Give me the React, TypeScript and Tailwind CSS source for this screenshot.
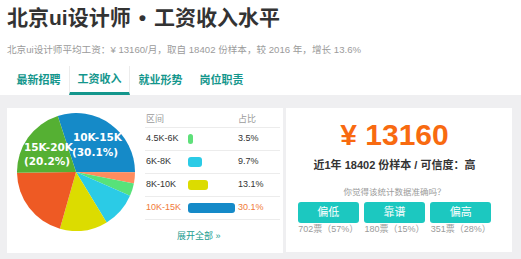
const slices = [
  { pct: 30.1, color: "#158ac8" },
  { pct: 3.0, color: "#ff8c5e" },
  { pct: 3.5, color: "#57e27a" },
  { pct: 9.7, color: "#2bcbe6" },
  { pct: 13.1, color: "#dcdc00" },
  { pct: 20.4, color: "#ee5a24" },
  { pct: 20.2, color: "#55b033" },
]

const rows = [
  { label: "4.5K-6K", pct: "3.5%", w: 5, color: "#5ee07a" },
  { label: "6K-8K", pct: "9.7%", w: 14, color: "#2bcbe6" },
  { label: "8K-10K", pct: "13.1%", w: 20, color: "#dcdc00" },
  { label: "10K-15K", pct: "30.1%", w: 47, color: "#158ac8", active: true },
]

const tabs = ["最新招聘", "工资收入", "就业形势", "岗位职责"]

const votes = [
  { name: "偏低", count: "702票（57%）" },
  { name: "靠谱", count: "180票（15%）" },
  { name: "偏高", count: "351票（28%）" },
]

function slicePath(cx: number, cy: number, r: number, a0: number, a1: number) {
  const pt = (a: number) => [
    cx + r * Math.sin((a * Math.PI) / 180),
    cy - r * Math.cos((a * Math.PI) / 180),
  ]
  const [x0, y0] = pt(a0)
  const [x1, y1] = pt(a1)
  const large = a1 - a0 > 180 ? 1 : 0
  return `M ${cx} ${cy} L ${x0} ${y0} A ${r} ${r} 0 ${large} 1 ${x1} ${y1} Z`
}

const Pie = () => {
  let angle = -18
  return (
    <svg width="118" height="118" viewBox="0 0 118 118" className="mt-[5px] shrink-0">
      {slices.map((s, i) => {
        const a0 = angle
        const a1 = angle + (s.pct / 100) * 360
        angle = a1
        return <path key={i} d={slicePath(59, 59, 59, a0, a1)} fill={s.color} />
      })}
      <g
        fill="#fff"
        fontSize="10.5"
        fontWeight="bold"
        fontFamily="'DejaVu Sans', sans-serif"
      >
        <text x="56" y="28">10K-15K</text>
        <text x="55" y="43">(30.1%)</text>
        <text x="7" y="38">15K-20K</text>
        <text x="7" y="52">(20.2%)</text>
      </g>
    </svg>
  )
}

export default function App() {
  return (
    <div
      className="w-[521px] h-[259px] overflow-hidden bg-[#efeff1]"
      style={{ fontFamily: "'Liberation Sans', 'Noto Sans CJK SC', sans-serif" }}
    >
      <div className="h-[95px] bg-white px-[7px]">
        <div className="flex h-[34px] items-center text-[21px] font-bold leading-none text-[#333]">
          北京ui设计师<span className="mx-[8px]">•</span>工资收入水平
        </div>
        <div className="flex h-[32px] items-center text-[9.6px] text-[#9b9b9b]">
          北京ui设计师平均工资：¥ 13160/月，取自 18402 份样本，较 2016 年，增长 13.6%
        </div>
        <div className="flex h-[29px] pl-[1px]">
          {tabs.map((t, i) => (
            <div
              key={t}
              className={
                i === 1
                  ? "flex w-[61px] items-center justify-center border-x border-b-[3px] border-x-[#ececec] border-b-[#13968c] text-[11px] font-bold text-[#13968c]"
                  : "flex w-[61px] items-center justify-center text-[11px] font-bold text-[#13968c]"
              }
            >
              {t}
            </div>
          ))}
        </div>
      </div>

      <div className="flex gap-[3px] pl-[7px] pt-[13px]">
        <div className="flex h-[145px] w-[276px] bg-white pl-[10px]">
          <Pie />
          <div className="ml-[10px] mt-[4px] flex w-[135px] flex-col text-[9px]">
            <div className="flex h-[16px] items-center border-b border-[#ececec] text-[#9b9b9b]">
              <span className="w-[93px] pl-[1px]">区间</span>
              <span>占比</span>
            </div>
            {rows.map((r) => (
              <div
                key={r.label}
                className={
                  r.active
                    ? "flex h-[23px] items-center border-b border-[#ececec] text-[#f07a3a]"
                    : "flex h-[23px] items-center border-b border-[#ececec] text-[#333]"
                }
              >
                <span className="w-[43px] pl-[1px]">{r.label}</span>
                <span className="w-[50px]">
                  <span
                    className="block h-[10px] rounded-[3px]"
                    style={{ width: r.w, backgroundColor: r.color }}
                  />
                </span>
                <span>{r.pct}</span>
              </div>
            ))}
            <div className="flex h-[33px] items-center pl-[32px] text-[#1b9c8f]">
              展开全部 »
            </div>
          </div>
        </div>

        <div className="h-[144px] w-[226px] bg-white">
          <div className="flex w-[217px] flex-col items-center">
            <div className="mt-[12px] text-[30px] font-bold leading-[30px] text-[#f86a10]">
              ¥ 13160
            </div>
            <div className="mt-[8px] text-[11px] font-bold leading-[14px] text-[#333]">
              近1年 18402 份样本 / 可信度：高
            </div>
            <div className="mt-[15px] text-[8.5px] leading-[10px] text-[#9b9b9b]">
              你觉得该统计数据准确吗？
            </div>
            <div className="mt-[5px] grid w-[194px] grid-cols-3 gap-[5px]">
              {votes.map((v) => (
                <div
                  key={v.name}
                  className="flex h-[21px] items-center justify-center rounded-[3px] bg-[#1cc8c0] text-[11px] text-white"
                >
                  {v.name}
                </div>
              ))}
            </div>
            <div className="grid w-[194px] grid-cols-3 gap-[5px]">
              {votes.map((v) => (
                <div key={v.name} className="text-center text-[9px] leading-[12px] text-[#9b9b9b]">
                  {v.count}
                </div>
              ))}
            </div>
          </div>
        </div>
      </div>
    </div>
  )
}
